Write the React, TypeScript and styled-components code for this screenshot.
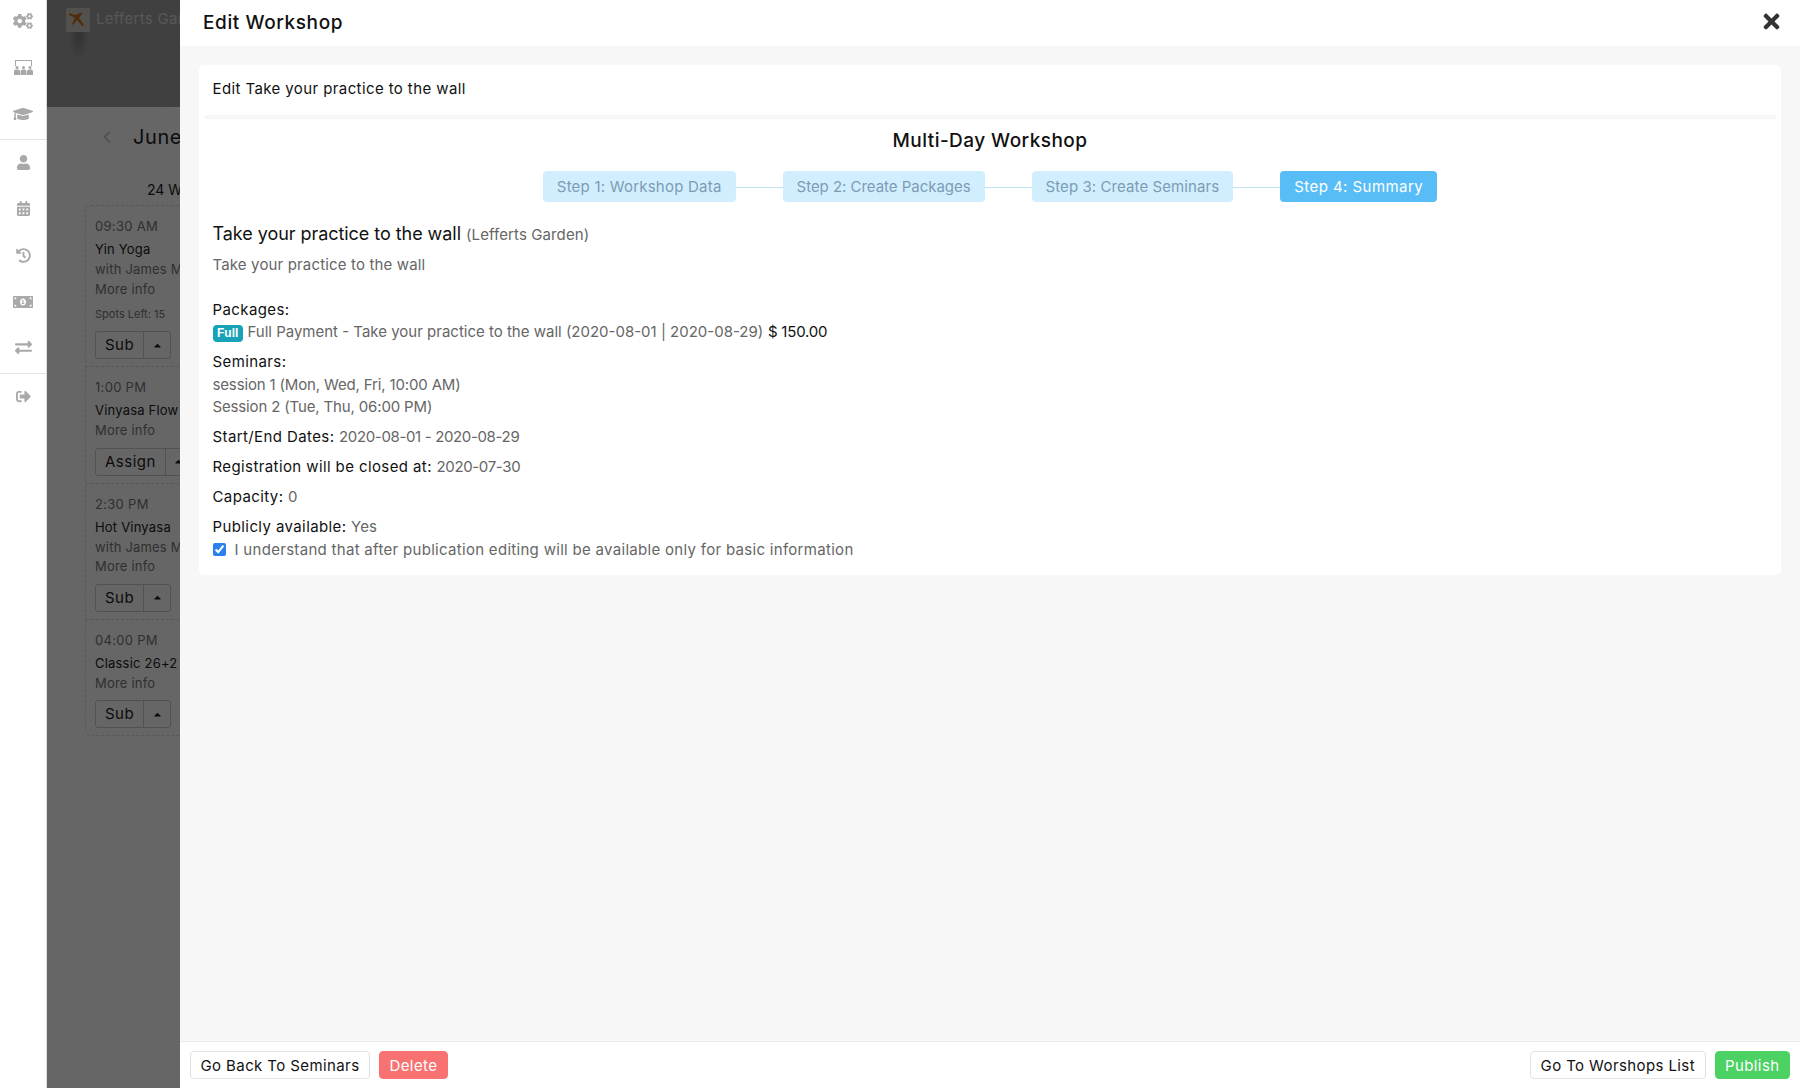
import React from 'react';
import styled, { createGlobalStyle } from 'styled-components';
import { ChevronLeft } from 'lucide-react';
import {
  FaCalendarAlt,
  FaCaretUp,
  FaCogs,
  FaExchangeAlt,
  FaGraduationCap,
  FaHistory,
  FaMoneyBillAlt,
  FaSignOutAlt,
  FaTimes,
  FaUser,
} from 'react-icons/fa';

const fontStack = `Inter, "Open Sans", "Liberation Sans", sans-serif`;

const sessions = [
  { time: '09:30 AM', name: 'Yin Yoga', teacher: 'with James M', spots: 'Spots Left: 15', action: 'Sub' },
  { time: '1:00 PM', name: 'Vinyasa Flow', action: 'Assign' },
  { time: '2:30 PM', name: 'Hot Vinyasa', teacher: 'with James M', action: 'Sub' },
  { time: '04:00 PM', name: 'Classic 26+2', action: 'Sub' },
];

const steps = [
  { label: 'Step 1: Workshop Data', tracking: 0.22 },
  { label: 'Step 2: Create Packages', tracking: -0.03 },
  { label: 'Step 3: Create Seminars', tracking: 0.08 },
  { label: 'Step 4: Summary', tracking: 0.45 },
];

const RoomIcon = () => (
  <svg width="19" height="15" viewBox="0 0 19 15" fill="currentColor">
    <path d="M1 0h17v1H1zM1 1h1v5H1zM17 1h1v5h-1z" />
    <circle cx="3" cy="7.500" r="1.500" />
    <circle cx="9.500" cy="7.500" r="1.500" />
    <circle cx="16" cy="7.500" r="1.500" />
    <path d="M0 11.500a2 2 0 0 1 2-2h2a2 2 0 0 1 2 2V15H0zM6.500 11.500a2 2 0 0 1 2-2h2a2 2 0 0 1 2 2V15h-6zM13 11.500a2 2 0 0 1 2-2h2a2 2 0 0 1 2 2V15h-6z" />
  </svg>
);

export default function App() {
  return (
    <>
      <GlobalStyle />
      <Page>
        <Sidebar>
          <NavGroup>
            <NavItem><FaCogs size={20} /></NavItem>
            <NavItem><RoomIcon /></NavItem>
            <NavItem><FaGraduationCap size={20} /></NavItem>
          </NavGroup>
          <NavGroup>
            <NavItem><FaUser size={15} /></NavItem>
            <NavItem><FaCalendarAlt size={15} /></NavItem>
            <NavItem><FaHistory size={15} /></NavItem>
            <NavItem><FaMoneyBillAlt size={20} /></NavItem>
            <NavItem><FaExchangeAlt size={17} /></NavItem>
          </NavGroup>
          <NavGroup>
            <NavItem><FaSignOutAlt size={15} /></NavItem>
          </NavGroup>
        </Sidebar>

        <Main>
          <Hero>
            <Logo>
              <svg width="24" height="24" viewBox="0 0 24 24">
                <rect width="24" height="24" rx="2" fill="#cfcac4" />
                <path d="M3 5l6 2 8-3-4 6 5 7-2 1-5-6-4 5-1-1 3-6-6-3z" fill="#c8701a" />
              </svg>
            </Logo>
            <StudioName>Lefferts Garden</StudioName>
          </Hero>
          <MonthRow>
            <ChevronLeft size={20} color="#c4c4c4" />
            <MonthName>June 2020</MonthName>
          </MonthRow>
          <DayLabel>24 Wednesday</DayLabel>
          <Schedule>
            {sessions.map((session) => (
              <Session key={session.time}>
                <SessionTime>{session.time}</SessionTime>
                <SessionName>{session.name}</SessionName>
                {session.teacher && <SessionMeta>{session.teacher}</SessionMeta>}
                <SessionMeta>More info</SessionMeta>
                {session.spots && <SpotsLeft>{session.spots}</SpotsLeft>}
                <SplitButton>
                  <SplitLabel>{session.action}</SplitLabel>
                  <SplitCaret><FaCaretUp size={11} /></SplitCaret>
                </SplitButton>
              </Session>
            ))}
          </Schedule>
        </Main>

        <Drawer>
          <DrawerHeader>
            <DrawerTitle>Edit Workshop</DrawerTitle>
            <FaTimes size={23} color="#333" />
          </DrawerHeader>
          <DrawerBody>
            <Card>
              <CardTitle>Edit Take your practice to the wall</CardTitle>
              <Divider />
              <WizardTitle>Multi-Day Workshop</WizardTitle>
              <Stepper>
                {steps.map((step, index) => (
                  <React.Fragment key={step.label}>
                    {index > 0 && <Connector />}
                    <Step $active={index === steps.length - 1} $tracking={step.tracking}>{step.label}</Step>
                  </React.Fragment>
                ))}
              </Stepper>
              <Summary>
                <WorkshopName>
                  Take your practice to the wall <Venue>(Lefferts Garden)</Venue>
                </WorkshopName>
                <Description>Take your practice to the wall</Description>
                <Block>
                  <Line>Packages:</Line>
                  <Line>
                    <Badge>Full</Badge> <Muted $spacing={0}>Full Payment - Take your practice to the wall (2020-08-01 | 2020-08-29)</Muted>{' '}
                    <Price>$ 150.00</Price>
                  </Line>
                </Block>
                <Block>
                  <Line>Seminars:</Line>
                  <Line><Muted $spacing={-0.15}>session 1 (Mon, Wed, Fri, 10:00 AM)</Muted></Line>
                  <Line><Muted $spacing={-0.15}>Session 2 (Tue, Thu, 06:00 PM)</Muted></Line>
                </Block>
                <Block>
                  <Line>Start/End Dates: <Muted $spacing={-0.35}>2020-08-01 - 2020-08-29</Muted></Line>
                </Block>
                <Block>
                  <Line>Registration will be closed at: <Muted $spacing={-0.35}>2020-07-30</Muted></Line>
                </Block>
                <Block>
                  <Line>Capacity: <Muted>0</Muted></Line>
                </Block>
                <Block>
                  <Line>Publicly available: <Muted>Yes</Muted></Line>
                  <CheckRow>
                    <Checkbox type="checkbox" defaultChecked />
                    <Muted $spacing={0.3}>I understand that after publication editing will be available only for basic information</Muted>
                  </CheckRow>
                </Block>
              </Summary>
            </Card>
          </DrawerBody>
          <DrawerFooter>
            <ButtonGroup>
              <Button>Go Back To Seminars</Button>
              <Button $variant="danger">Delete</Button>
            </ButtonGroup>
            <ButtonGroup>
              <Button>Go To Worshops List</Button>
              <Button $variant="success">Publish</Button>
            </ButtonGroup>
          </DrawerFooter>
        </Drawer>
      </Page>
    </>
  );
}

const GlobalStyle = createGlobalStyle`
  html, body {
    margin: 0;
    height: 100%;
    overflow: hidden;
  }
  body {
    font-family: ${fontStack};
    font-size: 15px;
    color: #111;
  }
  * {
    box-sizing: border-box;
  }
`;

const Page = styled.div`
  position: relative;
  display: flex;
  width: 1800px;
  height: 1088px;
  overflow: hidden;
  background: #fff;
`;

const Sidebar = styled.nav`
  flex: 0 0 47px;
  display: flex;
  flex-direction: column;
  background: #fff;
  border-right: 1px solid #dcdcdc;
  color: #a9a9a9;
`;

const NavGroup = styled.div`
  border-bottom: 1px solid #e4e4e4;
  & + & {
    padding-top: 1px;
  }
  &:last-child {
    border-bottom: 0;
  }
`;

const NavItem = styled.div`
  height: 46.4px;
  padding-bottom: 4px;
  display: flex;
  align-items: center;
  justify-content: center;
`;

const Main = styled.main`
  position: relative;
  flex: 1;
  background: #fff;
  &::after {
    content: '';
    position: absolute;
    inset: 0;
    background: rgba(0, 0, 0, 0.6);
  }
`;

const Hero = styled.header`
  height: 107px;
  padding: 8px 0 0 19px;
  display: flex;
  align-items: flex-start;
  gap: 6px;
  background:
    radial-gradient(ellipse 10px 26px at 32px 34px, #7d7d7d, transparent),
    linear-gradient(90deg, #a0a0a0, #b0b0b0);
`;

const Logo = styled.div`
  width: 24px;
  height: 24px;
`;

const StudioName = styled.div`
  font-size: 15px;
  line-height: 22px;
  letter-spacing: 0.3px;
  color: #fff;
  opacity: 0.6;
  white-space: nowrap;
`;

const MonthRow = styled.div`
  height: 60px;
  padding-left: 50px;
  display: flex;
  align-items: center;
  gap: 16px;
`;

const MonthName = styled.div`
  font-size: 20px;
  letter-spacing: 0.6px;
  white-space: nowrap;
  color: #222;
`;

const DayLabel = styled.div`
  padding: 14px 0 0 100px;
  height: 38px;
  font-size: 14px;
  white-space: nowrap;
  color: #222;
`;

const Schedule = styled.section`
  margin-left: 38px;
  width: 400px;
  border: 1px dashed #ddd;
  border-radius: 6px;
`;

const Session = styled.article`
  padding: 10px 10px 7px 9px;
  border-bottom: 1px dashed #ddd;
  &:last-child {
    border-bottom: 0;
  }
`;

const SessionTime = styled.div`
  font-size: 13px;
  line-height: 20px;
  letter-spacing: 0.3px;
  color: #777;
`;

const SessionName = styled.div`
  font-size: 13px;
  line-height: 22px;
  margin-top: 2px;
  letter-spacing: 0.2px;
  color: #222;
`;

const SessionMeta = styled.div`
  font-size: 13px;
  line-height: 19.5px;
  letter-spacing: 0.2px;
  color: #777;
`;

const SpotsLeft = styled.div`
  font-size: 11px;
  line-height: 20px;
  margin-top: 5px;
  color: #777;
`;

const SplitButton = styled.div`
  display: flex;
  width: fit-content;
  height: 28px;
  margin-top: 7px;
  border: 1px solid #ccc;
  border-radius: 3px;
  color: #222;
`;

const SplitLabel = styled.span`
  padding: 0 9px;
  font-size: 15px;
  line-height: 26px;
  letter-spacing: 0.5px;
  border-right: 1px solid #ccc;
`;

const SplitCaret = styled.span`
  width: 26px;
  display: flex;
  align-items: center;
  justify-content: center;
`;

const Drawer = styled.aside`
  position: absolute;
  top: 0;
  right: 0;
  bottom: 0;
  width: 1620px;
  display: flex;
  flex-direction: column;
  background: #f7f7f7;
`;

const DrawerHeader = styled.div`
  flex: 0 0 46px;
  padding: 0 17px 4px 23px;
  display: flex;
  align-items: center;
  justify-content: space-between;
  background: #fff;
`;

const DrawerTitle = styled.h2`
  margin: 3px 0 0;
  font-size: 19px;
  font-weight: 500;
  letter-spacing: 0.6px;
  color: #111;
`;

const DrawerBody = styled.div`
  flex: 1;
  padding: 19px 19px 0 19px;
`;

const Card = styled.section`
  height: 510px;
  background: #fff;
  border-radius: 5px;
  padding: 0 13.5px;
`;

const CardTitle = styled.div`
  height: 50px;
  padding-bottom: 3px;
  display: flex;
  align-items: center;
  font-size: 15px;
  letter-spacing: 0.4px;
`;

const Divider = styled.div`
  height: 4px;
  margin: 0 -8px;
  background: #f7f7f7;
`;

const WizardTitle = styled.h3`
  margin: 7px 0 0;
  height: 30px;
  line-height: 30px;
  text-align: center;
  font-size: 19px;
  font-weight: 500;
  letter-spacing: 0.45px;
`;

const Stepper = styled.div`
  margin-top: 15px;
  display: flex;
  align-items: center;
  justify-content: center;
`;

const Step = styled.div<{ $active?: boolean; $tracking: number }>`
  height: 31px;
  padding: 0 14px;
  display: flex;
  align-items: center;
  border-radius: 4px;
  font-size: 15px;
  white-space: nowrap;
  letter-spacing: ${(p) => p.$tracking}px;
  background: ${(p) => (p.$active ? '#58bdf7' : '#d1eeff')};
  color: ${(p) => (p.$active ? '#fff' : '#7c9cb3')};
`;

const Connector = styled.div`
  width: 47px;
  height: 1px;
  margin-top: 2px;
  background: #bfe4f8;
`;

const Summary = styled.div`
  padding-top: 19px;
`;

const WorkshopName = styled.div`
  font-size: 18px;
  line-height: 26px;
  letter-spacing: -0.05px;
`;

const Venue = styled.span`
  font-size: 15px;
  letter-spacing: 0.1px;
  color: #666;
`;

const Description = styled.div`
  margin-top: 6px;
  margin-bottom: 23px;
  font-size: 15px;
  line-height: 22px;
  letter-spacing: 0.15px;
  color: #666;
`;

const Block = styled.div`
  margin-bottom: 7.6px;
`;

const Line = styled.div`
  line-height: 22.4px;
  font-size: 15px;
  letter-spacing: 0.4px;
`;

const Muted = styled.span<{ $spacing?: number }>`
  color: #666;
  letter-spacing: ${(p) => p.$spacing ?? 0}px;
`;

const Price = styled.span`
  letter-spacing: -0.2px;
`;

const Badge = styled.span`
  display: inline-block;
  padding: 0 4.5px;
  border-radius: 4px;
  background: #17a2b8;
  color: #fff;
  font-family: "Liberation Sans", sans-serif;
  font-size: 12px;
  font-weight: 700;
  line-height: 17px;
  letter-spacing: 0;
`;

const CheckRow = styled.label`
  display: flex;
  align-items: center;
  gap: 9px;
  line-height: 22.4px;
`;

const Checkbox = styled.input`
  width: 13px;
  height: 13px;
  margin: 0;
  accent-color: #2b7fef;
`;

const DrawerFooter = styled.footer`
  flex: 0 0 47px;
  padding: 0 10px;
  display: flex;
  align-items: center;
  justify-content: space-between;
  background: #fff;
  border-top: 1px solid #eaeaea;
`;

const ButtonGroup = styled.div`
  display: flex;
  gap: 9px;
`;

const variants = {
  default: 'background: #fff; color: #111; border-color: #e2e2e2;',
  danger: 'background: #f87272; color: #fff; border-color: #f87272;',
  success: 'background: #4bd263; color: #fff; border-color: #4bd263;',
};

const Button = styled.button<{ $variant?: 'danger' | 'success' }>`
  height: 28px;
  padding: 0 9.5px;
  border: 1px solid;
  border-radius: 4px;
  font-family: ${fontStack};
  font-size: 15px;
  letter-spacing: 0.4px;
  ${(p) => variants[p.$variant ?? 'default']}
`;
